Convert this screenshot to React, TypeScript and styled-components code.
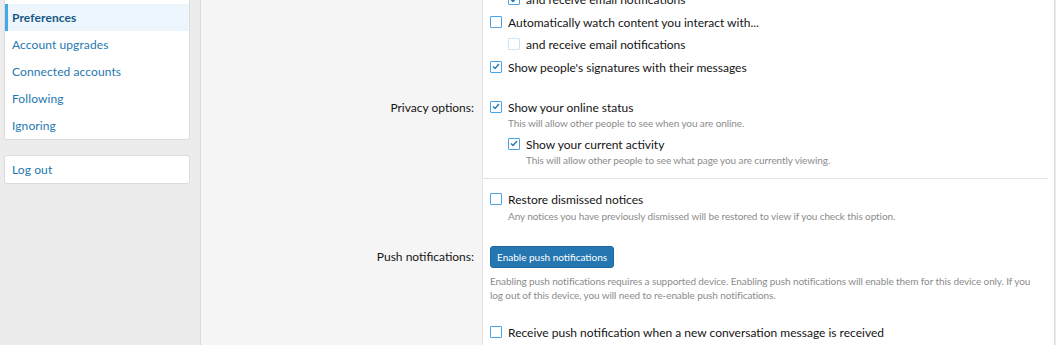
import React from "react";
import styled, { createGlobalStyle, css } from "styled-components";

const FONT = `"Lato", "Open Sans", "Liberation Sans", sans-serif`;

const Global = createGlobalStyle`
  html, body { margin: 0; padding: 0; }
  body {
    background: #ececec;
    font-family: ${FONT};
    color: #141414;
    overflow: hidden;
    width: 1056px;
    height: 345px;
  }
  * { box-sizing: border-box; }
`;

const Page = styled.div`
  display: grid;
  grid-template-columns: 200px 855px;
  align-items: start;
  height: 345px;
  overflow: hidden;
`;

const Sidebar = styled.aside`
  padding-left: 4px;
  width: 190px;
  display: flex;
  flex-direction: column;
  gap: 15px;
`;

const NavBlock = styled.div<{ $shift?: number }>`
  background: #fff;
  border: 1px solid #dcdcdc;
  border-radius: 3px;
  margin-top: ${(p) => (p.$shift ? `${p.$shift}px` : "0")};
  overflow: hidden;
`;

const NavItem = styled.a<{ $active?: boolean }>`
  display: block;
  padding: 5px 8px 5px 4px;
  border-left: 3px solid transparent;
  font-size: 12px;
  letter-spacing: 0.1px;
  line-height: 17px;
  color: #2577b1;
  text-decoration: none;
  ${(p) =>
    p.$active &&
    css`
      background: #edf6fd;
      border-left-color: #47a7eb;
      font-weight: 700;
      color: #185886;
    `}
`;

const Main = styled.main`
  background: #fff;
  border-left: 1px solid #dadada;
  border-right: 1px solid #dadada;
  margin-top: -21px;
  min-height: 370px;
  display: flex;
  flex-direction: column;
`;

const FormRow = styled.div<{ $fill?: boolean }>`
  display: grid;
  grid-template-columns: 282px 1fr;
  flex: ${(p) => (p.$fill ? "1 1 auto" : "none")};
`;

const RowLabel = styled.div<{ $lh?: number }>`
  background: #f5f5f5;
  border-right: 1px solid #e4e4e4;
  text-align: right;
  padding: 12px 8px 11px 0;
  font-size: 12px;
  line-height: ${(p) => p.$lh ?? 17}px;
  color: #141414;
`;

const RowBody = styled.div`
  padding: 12px 6px 11px 7px;
  line-height: 17px;
`;

const Sep = styled.div`
  flex: none;
  display: grid;
  grid-template-columns: 282px 1fr;
  height: 1px;
`;

const SepLeft = styled.div`
  background: #f5f5f5;
  border-right: 1px solid #e4e4e4;
`;

const SepLine = styled.div`
  background: #e2e2e2;
  margin-right: 6px;
`;

const ChoiceList = styled.div<{ $top?: number }>`
  display: flex;
  flex-direction: column;
  gap: 5.5px;
  margin-top: ${(p) => p.$top ?? 0}px;
`;

const Choice = styled.div<{ $indent?: boolean }>`
  padding-left: ${(p) => (p.$indent ? 18 : 0)}px;
`;

const ChoiceLine = styled.label`
  display: flex;
  align-items: flex-start;
  gap: 6px;
  font-size: 12px;
  line-height: 17px;
  color: #141414;
`;

const Box = styled.span<{ $disabled?: boolean }>`
  flex: none;
  width: 12px;
  height: 12px;
  margin-top: 2px;
  border: 1.5px solid ${(p) => (p.$disabled ? "#cbe3f6" : "#4aa3e6")};
  border-radius: 1px;
  background: #fff;
  display: flex;
  align-items: center;
  justify-content: center;
`;

const Hint = styled.div`
  font-size: 10px;
  letter-spacing: -0.1px;
  line-height: 13px;
  color: #8c8c8c;
  margin-top: 1.5px;
  padding-left: 18px;
`;

const Explain = styled.div`
  font-size: 10px;
  letter-spacing: -0.1px;
  line-height: 14px;
  color: #8c8c8c;
  margin-top: 6.5px;
  padding-right: 14px;
`;

const Button = styled.button`
  font-family: ${FONT};
  display: block;
  height: 22px;
  padding: 0 6px;
  border: 1px solid #2069a0;
  border-radius: 3px;
  background: #2577b1;
  color: #fff;
  font-size: 10px;
  line-height: 20px;
`;

const Check: React.FC<{ checked?: boolean; disabled?: boolean }> = ({ checked, disabled }) => (
  <Box $disabled={disabled}>
    {checked && (
      <svg width="8" height="7" viewBox="0 0 8 7">
        <polyline points="1,3.5 3,5.5 7,1" fill="none" stroke="#2577b1" strokeWidth="1.4" />
      </svg>
    )}
  </Box>
);

type Opt = { label: string; checked?: boolean; disabled?: boolean; indent?: boolean; hint?: string };

const Option: React.FC<Opt> = ({ label, checked, disabled, indent, hint }) => (
  <Choice $indent={indent}>
    <ChoiceLine>
      <Check checked={checked} disabled={disabled} />
      <span>{label}</span>
    </ChoiceLine>
    {hint && <Hint>{hint}</Hint>}
  </Choice>
);

export default function App() {
  return (
    <>
      <Global />
      <Page>
        <Sidebar>
          <NavBlock $shift={-24}>
            <NavItem>Privacy</NavItem>
            <NavItem $active>Preferences</NavItem>
            <NavItem>Account upgrades</NavItem>
            <NavItem>Connected accounts</NavItem>
            <NavItem>Following</NavItem>
            <NavItem>Ignoring</NavItem>
          </NavBlock>
          <NavBlock>
            <NavItem>Log out</NavItem>
          </NavBlock>
        </Sidebar>
        <Main>
          <FormRow>
            <RowLabel />
            <RowBody>
              <ChoiceList>
                <Option label="and receive email notifications" checked indent />
                <Option label="Automatically watch content you interact with..." />
                <Option label="and receive email notifications" disabled indent />
                <Option label="Show people's signatures with their messages" checked />
              </ChoiceList>
            </RowBody>
          </FormRow>
          <FormRow>
            <RowLabel>Privacy options:</RowLabel>
            <RowBody>
              <Option
                label="Show your online status"
                checked
                hint="This will allow other people to see when you are online."
              />
              <ChoiceList $top={5.5}>
                <Option
                  label="Show your current activity"
                  checked
                  indent
                  hint="This will allow other people to see what page you are currently viewing."
                />
              </ChoiceList>
            </RowBody>
          </FormRow>
          <Sep>
            <SepLeft />
            <SepLine />
          </Sep>
          <FormRow>
            <RowLabel />
            <RowBody>
              <Option
                label="Restore dismissed notices"
                hint="Any notices you have previously dismissed will be restored to view if you check this option."
              />
            </RowBody>
          </FormRow>
          <FormRow>
            <RowLabel $lh={22}>Push notifications:</RowLabel>
            <RowBody>
              <Button>Enable push notifications</Button>
              <Explain>
                Enabling push notifications requires a supported device. Enabling push notifications will
                enable them for this device only. If you log out of this device, you will need to re-enable
                push notifications.
              </Explain>
              <ChoiceList $top={22}>
                <Option label="Receive push notification when a new conversation message is received" />
              </ChoiceList>
            </RowBody>
          </FormRow>
          <FormRow $fill>
            <RowLabel />
            <RowBody />
          </FormRow>
        </Main>
      </Page>
    </>
  );
}
